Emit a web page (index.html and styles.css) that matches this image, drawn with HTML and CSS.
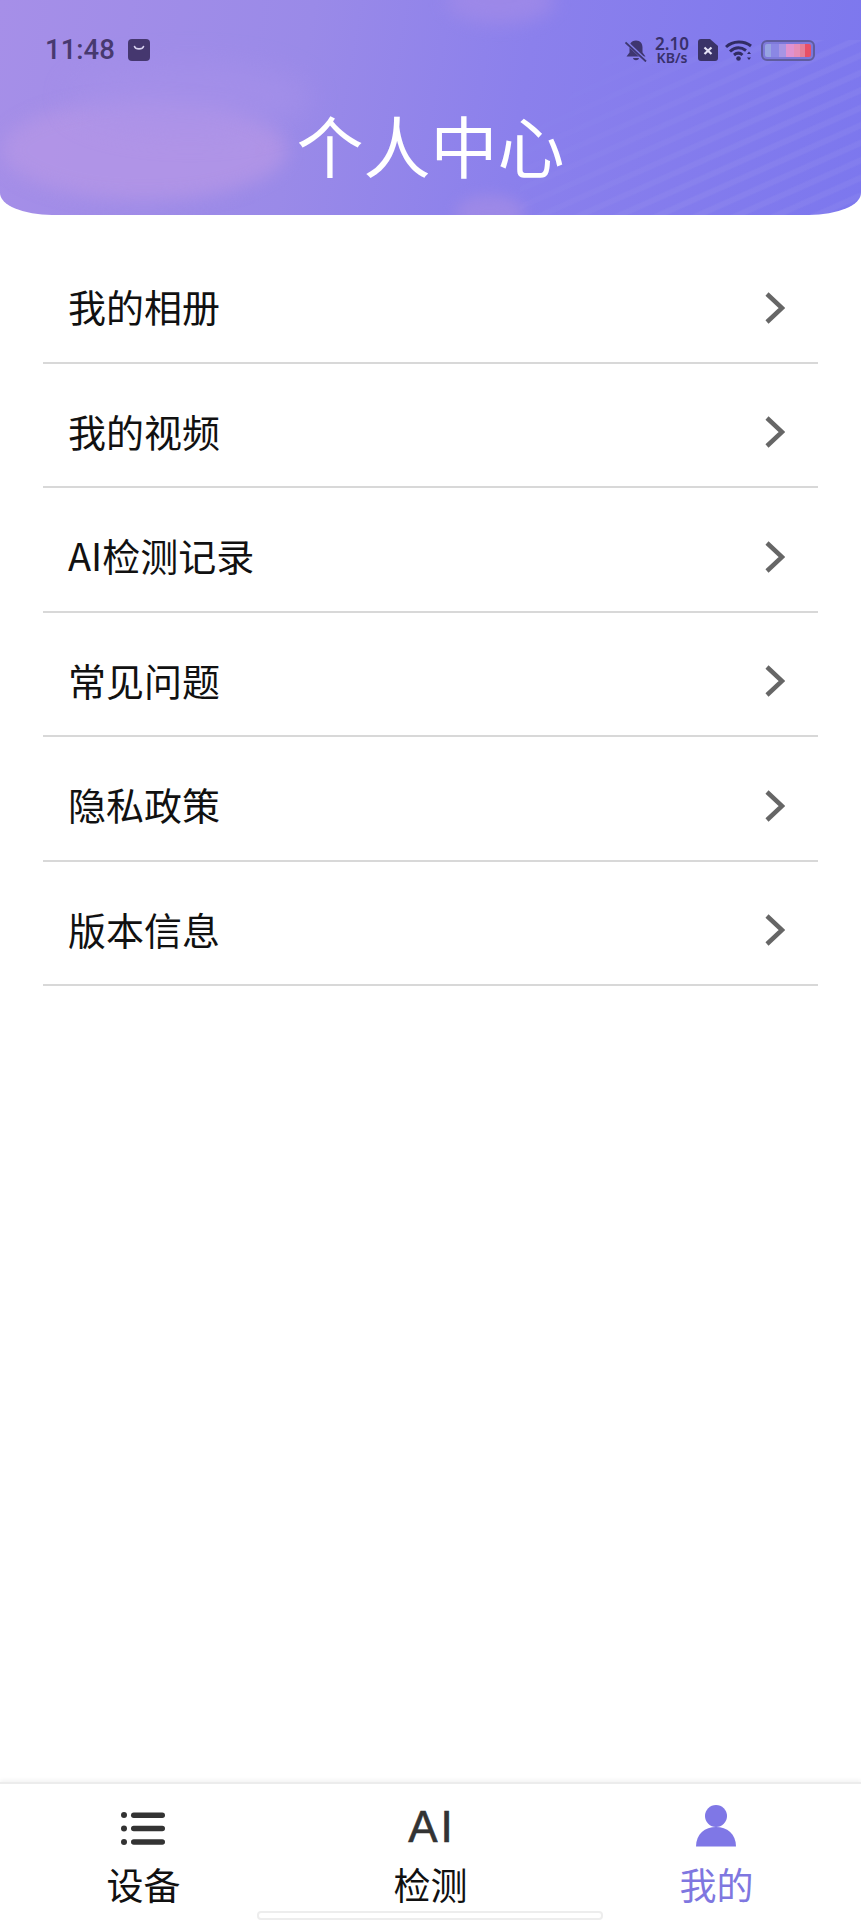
FILE: index.html
```html
<!DOCTYPE html>
<html lang="zh-CN">
<head>
<meta charset="utf-8">
<title>个人中心</title>
<link rel="stylesheet" href="styles.css">
</head>
<body>
<div class="app">
  <header class="hero">
    <div class="blob blob-a"></div>
    <div class="blob blob-b"></div>
    <div class="blob blob-c"></div>
    <div class="blob blob-d"></div>
    <div class="stripes"></div>
    <div class="status">
      <div class="status-left">
        <span class="time">11:48</span>
        <svg class="bag" viewBox="0 0 22 22"><rect width="22" height="22" rx="4" fill="#45376f"/><path d="M6.500 7.500c1 3.200 8 3.200 9 0" fill="none" stroke="#d9d2f0" stroke-width="1.600" stroke-linecap="round"/></svg>
      </div>
      <div class="status-right">
        <svg class="bell" viewBox="0 0 22 22"><path d="M11 1c-4.500 0-6.500 3.200-6.500 7v5l-3 4h19l-3-4V8c0-3.800-2-7-6.500-7zM8 18.500h6c-.5 3-5.500 3-6 0z" fill="#3f3670"/><path d="M0 1.500l21 20" stroke="#8380ea" stroke-width="3.400"/><path d="M.5 3l20.500 19" stroke="#3f3670" stroke-width="1.800"/></svg>
        <div class="speed"><span class="speed-num">2.10</span><span class="speed-unit">KB/s</span></div>
        <svg class="sim" viewBox="0 0 20 22"><path d="M3 0h9l8 7v12a3 3 0 0 1-3 3H3a3 3 0 0 1-3-3V3a3 3 0 0 1 3-3z" fill="#3a3368"/><path d="M6.500 8.500l7 6.500M13.500 8.500l-7 6.500" stroke="#e4e2f6" stroke-width="2.200"/></svg>
        <svg class="wifi" viewBox="0 0 28 22"><g fill="none" stroke="#312c63" stroke-width="3"><path d="M1 8C8 1.500 19 1.500 26 7"/><path d="M5 12.500c5-4.500 11-4.500 16-1"/><path d="M9 16c2.800-2.300 6-2.300 8.500 0"/></g><circle cx="13.500" cy="19.500" r="2.300" fill="#312c63"/><path d="M24 12.500l2 2.500h-4zM24 21l2-2.500h-4z" fill="#312c63"/></svg>
        <div class="battery"><div class="battery-fill"></div></div>
      </div>
    </div>
    <h1 class="title">个人中心</h1>
  </header>

  <main class="menu">
    <a class="row"><span>我的相册</span><svg class="chev" viewBox="0 0 20 32"><path d="M2 2l15 14L2 30" /></svg></a>
    <a class="row"><span>我的视频</span><svg class="chev" viewBox="0 0 20 32"><path d="M2 2l15 14L2 30" /></svg></a>
    <a class="row"><span>AI检测记录</span><svg class="chev" viewBox="0 0 20 32"><path d="M2 2l15 14L2 30" /></svg></a>
    <a class="row"><span>常见问题</span><svg class="chev" viewBox="0 0 20 32"><path d="M2 2l15 14L2 30" /></svg></a>
    <a class="row"><span>隐私政策</span><svg class="chev" viewBox="0 0 20 32"><path d="M2 2l15 14L2 30" /></svg></a>
    <a class="row"><span>版本信息</span><svg class="chev" viewBox="0 0 20 32"><path d="M2 2l15 14L2 30" /></svg></a>
  </main>

  <nav class="tabs">
    <a class="tab">
      <span class="tab-icon"><svg class="ic-list" viewBox="0 0 44 34"><g fill="#333"><circle cx="3" cy="4" r="3"/><circle cx="3" cy="17.500" r="3"/><circle cx="3" cy="31" r="3"/><rect x="10" y="1.500" width="34" height="5.500" rx="2.750"/><rect x="10" y="14.700" width="34" height="5.500" rx="2.750"/><rect x="10" y="28.200" width="34" height="5.500" rx="2.750"/></g></svg></span>
      <span class="tab-label">设备</span>
    </a>
    <a class="tab">
      <span class="tab-icon"><span class="ic-ai">AI</span></span>
      <span class="tab-label">检测</span>
    </a>
    <a class="tab active">
      <span class="tab-icon"><svg class="ic-user" viewBox="0 0 40 42"><circle cx="20" cy="11" r="11" fill="#7f77e6"/><path d="M0 41.500C0 29 9 22 20 22s20 7 20 19.500z" fill="#7f77e6"/></svg></span>
      <span class="tab-label">我的</span>
    </a>
  </nav>
  <div class="home-bar"></div>
</div>
</body>
</html>
```

FILE: styles.css
```css
* { box-sizing: border-box; }
html, body { margin: 0; padding: 0; background: #fff; }
body { font-family: "Noto Sans CJK SC", "Noto Sans", sans-serif; color: #111; }
.app { position: relative; height: 1920px; display: flex; flex-direction: column; overflow: hidden; }

.hero {
  position: relative;
  height: 215px;
  flex: none;
  overflow: hidden;
  padding: 33px 45px 0;
  border-radius: 0 0 52px 52px / 0 0 22px 22px;
  background: linear-gradient(100deg, #a68fe8 0%, #9a8ae8 35%, #8b80ec 60%, #7c77ee 100%);
}
.blob { position: absolute; border-radius: 50%; }
.blob-a { left: 2px; top: 100px; width: 285px; height: 100px; background: #b496e6; opacity: .8; filter: blur(9px); }
.blob-b { left: 70px; top: 62px; width: 240px; height: 70px; background: #a892ea; opacity: .55; filter: blur(14px); }
.blob-c { left: 445px; top: -22px; width: 110px; height: 46px; background: #a08ae8; opacity: .8; filter: blur(9px); }
.blob-d { left: 455px; top: 195px; width: 70px; height: 36px; background: #a18be6; opacity: .8; filter: blur(7px); }
.stripes {
  position: absolute; left: 520px; top: 40px; width: 341px; height: 175px;
  background: repeating-linear-gradient(-24deg, rgba(255,255,255,.05) 0 4px, rgba(255,255,255,0) 6px 14px, rgba(255,255,255,.05) 16px);
  -webkit-mask-image: linear-gradient(315deg, #000 35%, transparent 85%);
  mask-image: linear-gradient(315deg, #000 35%, transparent 85%);
}
.status { position: relative; display: flex; justify-content: space-between; align-items: center; height: 34px; }
.status-left { display: flex; align-items: center; gap: 13px; }
.time { font-family: Roboto, sans-serif; font-size: 27.500px; font-weight: 500; letter-spacing: 0; color: #47396f; line-height: 34px; }
.bag { width: 22px; height: 22px; }
.status-right { display: flex; align-items: center; margin-right: 1px; margin-left: auto; }
.bell { width: 22px; height: 23px; margin-right: 8px; }
.speed { display: flex; flex-direction: column; align-items: center; width: 34px; color: #38306b; font-family: "Noto Sans", sans-serif; font-weight: 600; margin-right: 9px; }
.speed-num { font-size: 17px; line-height: 15px; }
.speed-unit { font-size: 14px; line-height: 14px; }
.sim { width: 20px; height: 22px; margin-right: 7px; }
.wifi { width: 28px; height: 22px; margin-right: 8px; }
.battery { width: 54px; height: 21px; border: 2px solid #5f5c9e; border-radius: 6px; padding: 2px; background: rgba(120,118,200,.5); }
.battery-fill {
  height: 100%;
  border-radius: 2px;
  background: linear-gradient(90deg, #97a4e2 0 14%, #8b87e4 14% 30%, #a795e4 30% 46%, #df92d0 46% 62%, #e58db8 62% 76%, #e57f98 76% 88%, #e84f66 88% 100%);
}
.title {
  position: relative;
  margin: 37px 0 0;
  text-align: center;
  font-size: 67px;
  line-height: 80px;
  font-weight: 400;
  color: #fff;
}

.menu { flex: 1; display: flex; flex-direction: column; padding: 24px 43px 0; }
.row {
  height: 124.5px;
  flex: none;
  display: flex;
  align-items: center;
  justify-content: space-between;
  padding: 12px 33px 0 25px;
  border-bottom: 2px solid #d8d8d8;
  font-size: 38px;
  line-height: 48px;
  color: #111;
}
.chev { width: 20px; height: 32px; fill: none; stroke: #666; stroke-width: 4.500; margin-top: 3px; }

.tabs {
  flex: none;
  height: 138px;
  display: grid;
  grid-template-columns: repeat(3, 1fr);
  border-top: 2px solid #ececec;
  box-shadow: 0 -2px 4px rgba(0,0,0,.05);
  background: #fff;
}
.tab { display: flex; flex-direction: column; align-items: center; font-size: 37px; color: #111; }
.tab-icon { height: 63px; display: flex; align-items: flex-end; justify-content: center; padding-bottom: 2px; }
.tab-label { line-height: 48px; margin-top: 13px; }
.tab.active .tab-label { color: #7f77e0; margin-left: -2px; }
.ic-list { width: 44px; height: 34px; margin-right: 1px; }
.ic-ai { font-family: "Liberation Sans", sans-serif; font-size: 44px; line-height: 36px; letter-spacing: 3px; margin-right: -3px; color: #333; -webkit-text-stroke: .6px #333; }
.ic-user { width: 40px; height: 42px; margin-right: 3px; margin-bottom: -2px; }

.home-bar {
  position: absolute; left: 257px; top: 1911px; width: 346px; height: 9px;
  border: 2px solid #ededed; border-radius: 4px; background: #fff;
}
```
